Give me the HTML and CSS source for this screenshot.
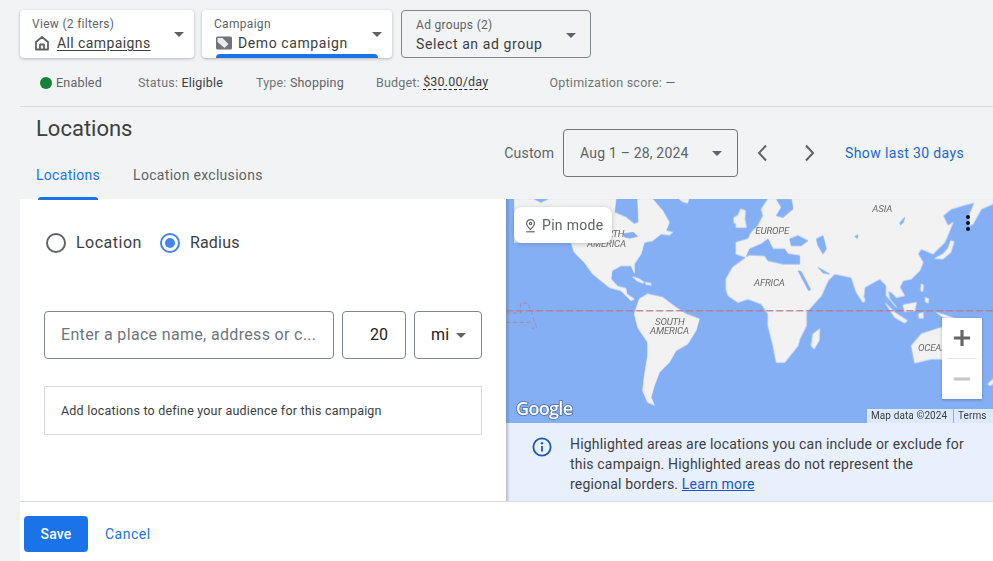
FILE: index.html
```html
<!DOCTYPE html>
<html lang="en">
<head>
<meta charset="utf-8">
<title>Locations</title>
<link rel="stylesheet" href="styles.css">
</head>
<body>
<div class="page">
  <div class="selectors">
    <div class="chip chip-view">
      <div class="chip-text">
        <div class="chip-label">View (2 filters)</div>
        <div class="chip-value">
          <svg class="chip-icon" viewBox="0 0 16 16"><path class="i-stroke" d="M2 7 8 2l6 5v7.500H2zM6 14.500V9.500h4v5"/></svg>
          <span class="underlined">All campaigns</span>
        </div>
      </div>
      <span class="caret"></span>
    </div>
    <div class="chip chip-campaign">
      <div class="chip-text">
        <div class="chip-label">Campaign</div>
        <div class="chip-value">
          <svg class="chip-icon" viewBox="0 0 16 16"><rect class="i-fill" x="0" y="1.500" width="16" height="13" rx="1.500"/><path class="i-white" d="M1.500 3h5l6 6-4 4-7-6z"/></svg>
          <span>Demo campaign</span>
        </div>
      </div>
      <span class="caret"></span>
      <span class="chip-bar"></span>
    </div>
    <div class="chip chip-ads">
      <div class="chip-text">
        <div class="chip-label">Ad groups (2)</div>
        <div class="chip-value">Select an ad group</div>
      </div>
      <span class="caret"></span>
    </div>
  </div>

  <div class="meta">
    <span class="meta-item m-enabled"><span class="dot"></span><span class="dark">Enabled</span></span>
    <span class="meta-item m-status">Status:&nbsp;<span class="darker">Eligible</span></span>
    <span class="meta-item m-type">Type:&nbsp;<span class="dark">Shopping</span></span>
    <span class="meta-item m-budget">Budget:&nbsp;<span class="dashed">$30.00/day</span></span>
    <span class="meta-item m-score">Optimization score:&nbsp;<span class="dark">—</span></span>
  </div>

  <div class="header">
    <div class="header-left">
      <h1 class="title">Locations</h1>
      <div class="tabs">
        <span class="tab tab-active">Locations</span>
        <span class="tab">Location exclusions</span>
      </div>
    </div>
    <div class="header-right">
      <span class="custom">Custom</span>
      <div class="date-box"><span>Aug 1 – 28, 2024</span><span class="caret"></span></div>
      <svg class="chev chev-l" viewBox="0 0 12 18"><path d="M10 1.500 3 9l7 7.500"/></svg>
      <svg class="chev chev-r" viewBox="0 0 12 18"><path d="M2 1.500 9 9l-7 7.500"/></svg>
      <span class="link-last">Show last 30 days</span>
    </div>
  </div>

  <div class="panel">
    <div class="main">
      <div class="form">
        <div class="radios">
          <span class="radio"></span><span class="radio-label r-first">Location</span>
          <span class="radio radio-on"></span><span class="radio-label r-second">Radius</span>
        </div>
        <div class="inputs">
          <div class="field field-place">Enter a place name, address or c...</div>
          <div class="field field-num">20</div>
          <div class="field field-unit"><span>mi</span><span class="caret caret-sm"></span></div>
        </div>
        <div class="notice">Add locations to define your audience for this campaign</div>
      </div>
      <div class="side">
        <div class="map">
          <svg class="map-art" viewBox="0 0 1461 672">
            <g class="land">
              <path d="M25 0H80L105 12 130 0H330L325 40 360 55 385 75 398 70 395 0H440L470 35 490 70 480 95 500 100 490 108 465 105 440 125 415 130 405 165 385 195 385 222 375 200 345 200 318 215 315 240 335 262 360 268 362 285 385 300 375 305 345 275 310 265 285 245 260 225 235 190 205 160 195 130H25Z"/>
              <path d="M520 0H548L545 12 530 8Z"/>
              <path d="M385 345 400 300 425 285 470 295 510 325 540 345 580 360 570 395 545 435 510 455 490 490 460 520 445 560 435 595 445 618 425 610 410 575 415 530 425 470 425 430 395 385Z"/>
              <path d="M380 233 400 240 415 250 410 252 392 245Z"/>
              <path d="M418 250 435 253 435 258 420 256Z"/>
              <g transform="translate(726 0)">
                <path d="M-66 240-46 205-5 175-36 165-36 130 0 120 10 100 30 80 45 50 40 30 60 0H735V15L700 30 675 75 665 80 665 45 680 10 650 18 610 30 585 50 600 80 615 70 605 95 590 130 555 165 520 150 510 165 525 190 515 215 490 240 465 245 455 265 470 290 445 295 430 280 420 275 425 300 445 325 415 290 415 260 395 240 350 265 345 310 325 280 310 235 260 225 240 245 220 290 175 340 175 380 155 420 150 440 110 490 85 490 75 440 60 380 60 345 40 315 0 300-30 310-60 290-66 270Z"/>
                <path d="M-36 62-22 30-8 35-10 60-5 85-36 85Z"/>
                <path d="M-42 55-30 50-32 72-42 72Z"/>
                <path d="M190 440 195 405 215 390 213 425 198 450Z"/>
                <path d="M490 440 520 405 580 385 620 400 620 480 550 480 500 492Z"/>
                <path d="M465 318 505 310 500 335 470 338Z"/>
                <path d="M412 312 440 340 478 365 470 372 440 355Z"/>
                <path d="M520 255 526 258 524 278 518 275Z"/>
                <path d="M532 295 542 300 540 312 532 308Z"/>
                <path d="M560 178 585 165 600 148 608 125 618 128 608 160 585 180Z"/>
                <path d="M565 340 590 348 625 360 590 358Z"/>
                <path d="M512 345 525 340 525 358 512 356Z"/>
                <path d="M720 555 735 540V555L725 560Z"/>
                <path d="M345 298 350 298 350 308 345 308Z"/>
              </g>
            </g>
            <g class="sea">
              <path d="M352 104 382 100 395 112 372 118 355 114Z"/>
              <g transform="translate(726 0)">
                <path d="M-5 172 5 150 40 135 60 120 75 150 110 150 120 165 155 170 155 195 105 195 60 185 50 170 5 168Z"/>
                <path d="M125 120 150 110 180 125 160 140 130 140Z"/>
                <path d="M205 120 225 110 235 150 225 165 210 140Z"/>
                <path d="M210 205 245 225 225 222Z"/>
                <path d="M150 215 160 218 188 272 182 275Z"/>
                <path d="M85 0H130L135 30 105 55 85 50 100 25Z"/>
                <path d="M30 0H45L30 40 0 65 0 20Z"/>
                <path d="M455 72 470 55 466 70 458 78Z"/>
                <path d="M320 112 330 108 328 118Z"/>
              </g>
            </g>
            <path class="equator" d="M0 336H1461"/>
            <path class="equator thin" d="M0 342H44V312H66L92 385 78 388M0 370H78"/>
            <g class="map-labels">
              <text x="355" y="113" text-anchor="end">NORTH</text>
              <text x="243" y="145">AMERICA</text>
              <text x="447" y="378">SOUTH</text>
              <text x="432" y="405">AMERICA</text>
              <text x="748" y="105">EUROPE</text>
              <text x="744" y="262">AFRICA</text>
              <text x="1099" y="40">ASIA</text>
              <text x="1236" y="457">OCEANIA</text>
            </g>
            <text class="google-logo" x="30" y="648">Google</text>
          </svg>
          <div class="pin-btn">
            <svg class="pin-icon" viewBox="0 0 14 18"><path d="M7 1.500a5 5 0 0 1 5 5c0 3-3 5.500-5 7.500-2-2-5-4.500-5-7.500a5 5 0 0 1 5-5z"/><circle cx="7" cy="6.500" r="1.500"/><path d="M1.500 17h11"/></svg>
            <span>Pin mode</span>
          </div>
          <div class="kebab"><i></i><i></i><i></i></div>
          <div class="zoom">
            <div class="zoom-btn"><svg viewBox="0 0 20 20"><path class="z-plus" d="M10 1V19M1 10H19"/></svg></div>
            <div class="zoom-sep"></div>
            <div class="zoom-btn"><svg viewBox="0 0 20 20"><path class="z-minus" d="M1 10H19"/></svg></div>
          </div>
          <div class="attrib"><span class="attrib-item a-data">Map data ©2024</span><span class="attrib-item a-terms">Terms</span></div>
        </div>
        <div class="info">
          <svg class="info-icon" viewBox="0 0 22 22"><circle cx="11" cy="11" r="9.500"/><path d="M11 10v6"/><circle class="info-dot" cx="11" cy="6.800" r="1.300"/></svg>
          <p class="info-text">Highlighted areas are locations you can include or exclude for this campaign. Highlighted areas do not represent the regional borders. <span class="learn">Learn more</span></p>
        </div>
      </div>
    </div>
    <div class="footer">
      <span class="btn-save">Save</span>
      <span class="btn-cancel">Cancel</span>
    </div>
  </div>
</div>
</body>
</html>
```
FILE: styles.css
```css
* { box-sizing: border-box; }
html, body { margin: 0; height: 100%; }
body {
  background: #f1f3f4;
  font-family: Roboto, "Liberation Sans", sans-serif;
  color: #3c4043;
  overflow: hidden;
}
.page { width: 993px; height: 561px; display: flex; flex-direction: column; }

/* selectors */
.selectors { display: flex; padding: 10px 0 0 20px; height: 58px; }
.chip {
  position: relative;
  display: flex;
  align-items: flex-start;
  justify-content: space-between;
  height: 48px;
  border-radius: 4px;
  background: #fff;
  box-shadow: 0 1px 3px rgba(60, 64, 67, .35);
  padding: 6px 10px 0 12px;
}
.chip-view { width: 174px; margin-right: 8px; }
.chip-campaign { width: 190px; margin-right: 9px; }
.chip-ads {
  width: 190px;
  background: transparent;
  box-shadow: none;
  border: 1px solid #80868b;
  padding: 6px 14px 0 14px;
}
.chip-label { font-size: 12px; line-height: 16px; letter-spacing: .3px; color: #5f6368; }
.chip-value {
  display: flex;
  align-items: center;
  font-size: 14px;
  line-height: 20px;
  letter-spacing: .6px;
  color: #3c4043;
  margin-top: 1px;
}
.chip-view .chip-value, .chip-campaign .chip-value { margin-left: 2px; }
.chip-icon { width: 16px; height: 16px; margin-right: 7px; flex: none; }
.chip-campaign .chip-icon { margin-right: 6px; }
.i-stroke { fill: none; stroke: #5f6368; stroke-width: 1.800; stroke-linejoin: round; }
.i-fill { fill: #70757a; }
.i-white { fill: #e8eaed; }
.underlined { letter-spacing: .4px; text-decoration: underline; text-underline-offset: 2px; }
.caret {
  width: 0;
  height: 0;
  border-left: 5.500px solid transparent;
  border-right: 5.500px solid transparent;
  border-top: 5px solid #5f6368;
  flex: none;
  margin-top: 16px;
}
.chip-bar {
  position: absolute;
  left: 14px;
  right: 14px;
  bottom: 0;
  height: 4px;
  border-radius: 4px 4px 0 0;
  background: #1a73e8;
}

/* meta */
.meta { display: flex; align-items: center; height: 48px; padding: 1px 0 0 40px; font-size: 12.500px; color: #70757a; letter-spacing: .2px; }
.meta-item { display: flex; align-items: center; white-space: nowrap; }
.m-status { margin-left: 36px; }
.m-type { margin-left: 33px; }
.m-budget { margin-left: 32px; }
.m-score { margin-left: 61px; letter-spacing: .25px; }
.dot { width: 12px; height: 12px; border-radius: 50%; background: #188038; margin-right: 4px; }
.dark { color: #5f6368; }
.darker { color: #3c4043; }
.dashed { color: #3c4043; border-bottom: 1px dashed #202124; line-height: 14px; }

/* header */
.header {
  display: flex;
  justify-content: space-between;
  height: 93px;
  margin-left: 20px;
  border-top: 1px solid #dadce0;
}
.title { margin: 8px 0 0 16px; font-size: 22px; line-height: 28px; font-weight: 400; color: #3c4043; }
.tabs { display: flex; margin: 19px 0 0 16px; }
.tab { font-size: 14px; line-height: 20px; letter-spacing: .3px; color: #5f6368; margin-right: 33px; height: 38px; padding-top: 3px; position: relative; white-space: nowrap; }
.tab-active { color: #1a73e8; }
.tab-active::after {
  content: "";
  position: absolute;
  left: 2px;
  right: 2px;
  bottom: 0;
  height: 3px;
  border-radius: 3px 3px 0 0;
  background: #1a73e8;
}
.header-right { display: flex; align-items: center; height: 48px; margin-top: 22px; padding-right: 29px; }
.custom { font-size: 14px; letter-spacing: .17px; color: #5f6368; margin-right: 9px; }
.date-box {
  display: flex;
  align-items: center;
  justify-content: space-between;
  width: 175px;
  height: 48px;
  border: 1px solid #70757a;
  border-radius: 4px;
  padding: 0 15px 0 16px;
  font-size: 14px;
  letter-spacing: .18px;
  color: #5f6368;
}
.date-box .caret { margin-top: 0; }
.chev { width: 12px; height: 18px; fill: none; stroke: #5f6368; stroke-width: 2; flex: none; }
.chev-l { margin-left: 18px; }
.chev-r { margin-left: 36px; }
.link-last { margin-left: 29px; font-size: 14px; letter-spacing: .36px; color: #1967d2; white-space: nowrap; }

/* panel */
.panel { margin-left: 20px; background: #fff; flex: 1; display: flex; flex-direction: column; }
.main { display: flex; height: 302px; }
.form { width: 486px; padding: 0 24px; flex: none; }
.radios { display: flex; align-items: center; height: 20px; margin-top: 34px; margin-left: 2px; }
.radio { width: 20px; height: 20px; border-radius: 50%; border: 2px solid #5f6368; flex: none; }
.radio-on { border-color: #4285f4; position: relative; }
.radio-on::after { content: ""; position: absolute; inset: 3px; border-radius: 50%; background: #4285f4; }
.radio-label { font-size: 16px; margin-left: 10px; padding-bottom: 2px; color: #3c4043; }
.r-first { letter-spacing: .5px; margin-right: 18px; }
.r-second { letter-spacing: .2px; }
.inputs { display: flex; gap: 8px; margin-top: 58px; }
.field {
  height: 48px;
  border: 1px solid #80868b;
  border-radius: 4px;
  display: flex;
  align-items: center;
  padding-bottom: 1px;
  font-size: 16px;
  color: #202124;
}
.field-place { width: 290px; padding-left: 16px; color: #70757a; letter-spacing: .33px; white-space: nowrap; }
.field-num { width: 64px; justify-content: flex-end; padding-right: 17px; }
.field-unit { width: 68px; padding-left: 16px; letter-spacing: .3px; }
.caret-sm { margin: 1px 0 0 6px; border-left-width: 5px; border-right-width: 5px; }
.notice {
  margin-top: 27px;
  height: 49px;
  border: 1px solid #dadce0;
  display: flex;
  align-items: center;
  padding-left: 16px;
  font-size: 12.500px;
  letter-spacing: .2px;
  color: #3c4043;
}
.side { width: 487px; flex: none; display: flex; flex-direction: column; position: relative; }
.side::after {
  content: "";
  position: absolute;
  left: 0;
  top: 0;
  bottom: 0;
  width: 4px;
  background: linear-gradient(to right, rgba(60, 64, 67, .28), rgba(60, 64, 67, 0));
}

/* map */
.map { position: relative; height: 224px; background: #85aff5; overflow: hidden; }
.map-art { display: block; width: 487px; height: 224px; }
.land { filter: blur(1.500px); }
.sea { filter: blur(1.500px); }
.land path { fill: #f2f2f2; stroke: #f2f2f2; stroke-width: 2; stroke-linejoin: round; }
.sea path { fill: #85aff5; stroke: #85aff5; stroke-linejoin: round; stroke-width: 2; }
.equator { fill: none; stroke: #b0798f; stroke-width: 4; stroke-dasharray: 22 8; opacity: .8; }
.equator.thin { stroke-width: 2.500; stroke-dasharray: 14 6; }
.map-labels text { font-family: Roboto, sans-serif; font-style: italic; font-size: 29px; fill: #6b6b6b; stroke: #f2f2f2; stroke-width: 1; paint-order: stroke; letter-spacing: -.5px; }
.google-logo {
  font-family: "Open Sans", sans-serif;
  font-weight: 600;
  font-size: 54px;
  letter-spacing: -2px;
  fill: #fff;
  stroke: #4a6fa8;
  stroke-width: 5;
  paint-order: stroke;
}
.pin-btn {
  position: absolute;
  left: 8px;
  top: 8px;
  width: 98px;
  height: 36px;
  background: #fff;
  border-radius: 8px;
  box-shadow: 0 1px 4px rgba(60, 64, 67, .3);
  display: flex;
  align-items: center;
  padding-left: 11px;
  font-size: 14px;
  letter-spacing: .3px;
  color: #5f6368;
}
.pin-icon { width: 11px; height: 15px; margin-right: 6px; fill: none; stroke: #5f6368; stroke-width: 1.500; }
.kebab { position: absolute; left: 460px; top: 16px; display: flex; flex-direction: column; gap: 2px; }
.kebab i { width: 4px; height: 4px; border-radius: 50%; background: #111; }
.zoom {
  position: absolute;
  left: 436px;
  top: 119px;
  width: 40px;
  height: 81px;
  background: #fff;
  box-shadow: 0 1px 3px rgba(0, 0, 0, .25);
  display: flex;
  flex-direction: column;
  align-items: center;
}
.zoom-btn { height: 40px; display: flex; align-items: center; justify-content: center; }
.zoom-btn svg { width: 18px; height: 18px; }
.zoom-sep { width: 30px; height: 1px; background: #e6e6e6; flex: none; }
.z-plus { stroke: #666; stroke-width: 3.500; fill: none; }
.z-minus { stroke: #c8c8c8; stroke-width: 3.500; fill: none; }
.attrib { position: absolute; right: 0; bottom: 0; display: flex; height: 14px; font-size: 10px; line-height: 14px; letter-spacing: .1px; color: #3c4043; }
.attrib-item { background: rgba(255, 255, 255, .72); white-space: nowrap; }
.a-data { width: 86px; padding-left: 4px; margin-right: 1px; }
.a-terms { width: 39px; padding-left: 4px; }

/* info */
.info { flex: 1; background: #e8f0fe; display: flex; padding: 11px 20px 0 26px; }
.info-icon { width: 20px; height: 20px; flex: none; margin: 3px 18px 0 0; fill: none; stroke: #1a56b8; stroke-width: 2; }
.info-dot { fill: #1a56b8; stroke: none; }
.info-text { margin: 0; font-size: 14px; line-height: 20px; letter-spacing: .19px; color: #3c4043; width: 396px; }
.learn { color: #1a56c8; text-decoration: underline; }

/* footer */
.footer { height: 60px; border-top: 1px solid #dadce0; display: flex; align-items: center; padding: 4px 0 0 4px; }
.btn-save {
  width: 64px;
  height: 36px;
  border-radius: 4px;
  background: #1a73e8;
  color: #fff;
  font-size: 14px;
  font-weight: 500;
  display: flex;
  align-items: center;
  justify-content: center;
  letter-spacing: .2px;
}
.btn-cancel { margin-left: 17px; font-size: 14px; letter-spacing: .5px; color: #1a73e8; }
```
